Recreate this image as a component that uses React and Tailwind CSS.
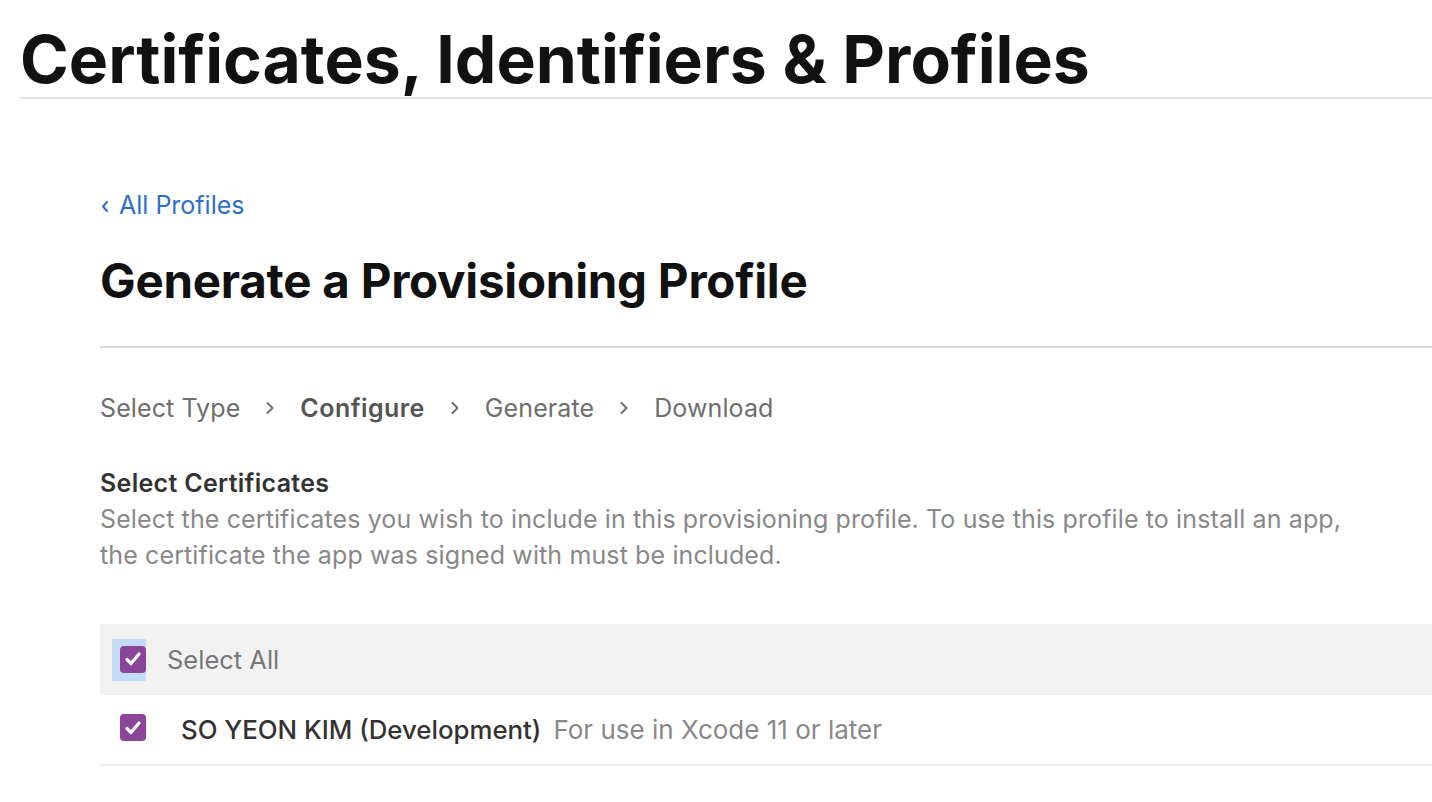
import React from "react";

function Check({ className = "" }) {
  return (
    <div className={`flex h-[27px] w-[26px] items-center justify-center rounded-[4px] bg-[#8a4598] ${className}`}>
      <svg width="18" height="16" viewBox="0 0 18 16" fill="none">
        <path d="M3 8.5 L7 12.5 L15 3" stroke="white" strokeWidth="3.2" strokeLinecap="round" strokeLinejoin="round" />
      </svg>
    </div>
  );
}

function Chevron() {
  return (
    <svg width="10" height="16" viewBox="0 0 10 16" fill="none" className="mx-[25px]">
      <path d="M2.5 3 L7.5 8 L2.5 13" stroke="#6e6e73" strokeWidth="2" strokeLinecap="round" strokeLinejoin="round" />
    </svg>
  );
}

export default function App() {
  return (
    <div className="min-h-[802px] w-full bg-white pl-[20px]" style={{ fontFamily: "Inter, 'Noto Sans', sans-serif" }}>
      <h1 className="border-b-2 border-[#e3e3e3] pt-[21px] text-[66px] font-bold leading-[76px] tracking-normal text-[#111111]">
        Certificates, Identifiers &amp; Profiles
      </h1>
      <div className="pl-[80px]">
        <a className="mt-[90px] flex h-[32px] items-center text-[25px] leading-[32px] text-[#2c70c8]">
          <svg width="10" height="16" viewBox="0 0 10 16" fill="none" className="mr-[9px] mt-[2px]">
            <path d="M7 4 L3 8.5 L7 13" stroke="#2c70c8" strokeWidth="2" strokeLinecap="round" strokeLinejoin="round" />
          </svg>
          All Profiles
        </a>
        <h2 className="mt-[32px] text-[47.5px] font-bold leading-[56px] tracking-[-0.25px] text-[#111111]">
          Generate a Provisioning Profile
        </h2>
        <div className="mt-[37px] border-t-2 border-[#dcdcdc]" />
        <div className="mt-[44px] flex h-[32px] items-center text-[25px] leading-[32px] tracking-[0.1px] text-[#6e6e6e]">
          <span>Select Type</span>
          <Chevron />
          <span className="font-semibold tracking-[0.45px] text-[#555555]">Configure</span>
          <Chevron />
          <span>Generate</span>
          <Chevron />
          <span>Download</span>
        </div>
        <div className="mt-[41px] text-[25px] font-semibold leading-[36px] tracking-[0.3px] text-[#333333]">Select Certificates</div>
        <p className="text-[25px] leading-[36px] tracking-[0.12px] text-[#888888]">
          Select the certificates you wish to include in this provisioning profile. To use this profile to install an app,
          <br />
          the certificate the app was signed with must be included.
        </p>
        <div className="mt-[51px] flex h-[71px] items-center bg-[#f2f2f2] pl-[12px]">
          <div className="flex h-[42px] w-[34px] items-start justify-end bg-[#c3dcf5] pt-[7px]">
            <Check />
          </div>
          <span className="ml-[21px] text-[25.5px] leading-[32px] text-[#777777]">Select All</span>
        </div>
        <div className="flex h-[71px] items-center border-b-2 border-[#ececec] pl-[20px]">
          <Check className="-mt-[4px]" />
          <span className="ml-[35px] text-[25.8px] font-medium leading-[32px] text-[#333333]">SO YEON KIM (Development)</span>
          <span className="ml-[12px] text-[26px] leading-[32px] text-[#888888]">For use in Xcode 11 or later</span>
        </div>
      </div>
    </div>
  );
}
